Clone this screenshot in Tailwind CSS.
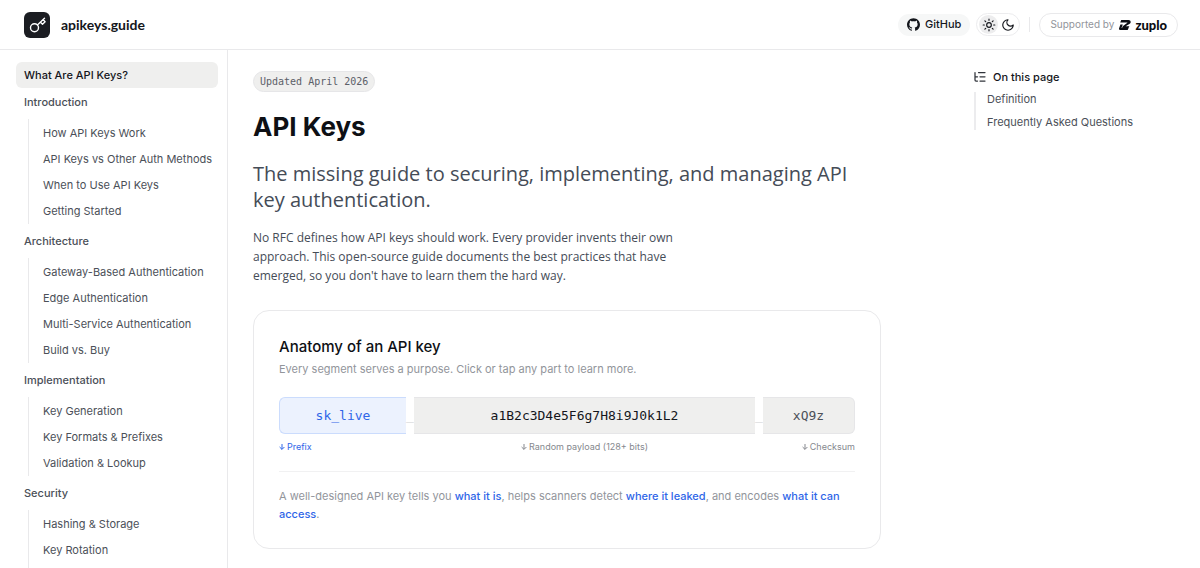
<!DOCTYPE html>
<html lang="en">
<head>
  <meta charset="UTF-8" />
  <meta name="viewport" content="width=device-width, initial-scale=1.0"/>
  <title>API Keys | apikeys.guide</title>
  <script src="https://cdn.jsdelivr.net/npm/@tailwindcss/browser@4"></script>
</head>
<body class="bg-white min-h-screen font-['Inter',sans-serif] text-[11px] text-[#4b5058]">
  <!-- Header -->
  <header class="flex h-[50px] items-center justify-between border-b border-[#e9e9eb] pl-6 pr-[22px]">
    <a href="#" class="flex items-center gap-[11px]">
      <svg class="size-[26px]" viewBox="0 0 26 26" fill="none" aria-hidden="true">
        <rect width="26" height="26" rx="6" fill="#1b1d22"/>
        <g stroke="#fff" stroke-width="1.4" stroke-linecap="round" stroke-linejoin="round">
          <circle cx="10.500" cy="15.800" r="4"/>
          <path d="M13.400 12.900 20.500 6.200M16.500 10.200l2 2 2.600-2.400-2-2.200"/>
        </g>
      </svg>
      <span class="font-['Lato',sans-serif] text-[14px] font-bold text-[#14161c]">apikeys.guide</span>
    </a>

    <div class="flex items-center">
      <a href="#" class="flex h-[22px] items-center gap-[5px] rounded-full bg-[#f6f7f7] px-[9px] text-[11px] font-medium text-[#14161c]">
        <svg class="size-[13px]" viewBox="0 0 24 24" fill="#14161c" aria-hidden="true">
          <path d="M12 .297c-6.630 0-12 5.373-12 12 0 5.303 3.438 9.800 8.205 11.385.6.113.82-.258.82-.577 0-.285-.010-1.040-.015-2.040-3.338.724-4.042-1.610-4.042-1.610C4.422 18.070 3.633 17.700 3.633 17.700c-1.087-.744.084-.729.084-.729 1.205.084 1.838 1.236 1.838 1.236 1.070 1.835 2.809 1.305 3.495.998.108-.776.417-1.305.76-1.605-2.665-.3-5.466-1.332-5.466-5.930 0-1.310.465-2.380 1.235-3.220-.135-.303-.54-1.523.105-3.176 0 0 1.005-.322 3.300 1.230.96-.267 1.980-.399 3-.405 1.020.006 2.040.138 3 .405 2.280-1.552 3.285-1.230 3.285-1.230.645 1.653.24 2.873.12 3.176.765.84 1.230 1.910 1.230 3.220 0 4.610-2.805 5.625-5.475 5.920.42.36.81 1.096.81 2.220 0 1.606-.015 2.896-.015 3.286 0 .315.210.69.825.57C20.565 22.092 24 17.592 24 12.297c0-6.627-5.373-12-12-12"/>
        </svg>
        GitHub
      </a>
      <div class="ml-[6px] flex h-[23px] items-center rounded-full border border-[#ececee] px-[2px]">
        <button type="button" aria-label="Light theme" class="flex size-[19px] items-center justify-center rounded-full bg-[#ededee]">
          <svg class="size-[14px]" viewBox="0 0 24 24" fill="none" stroke="#14161c" stroke-width="2" stroke-linecap="round" stroke-linejoin="round">
            <circle cx="12" cy="12" r="4"/>
            <path d="M12 2v2M12 20v2M4.930 4.930l1.410 1.410M17.660 17.660l1.410 1.410M2 12h2M20 12h2M6.340 17.660l-1.410 1.410M19.070 4.930l-1.410 1.410"/>
          </svg>
        </button>
        <button type="button" aria-label="Dark theme" class="flex size-[19px] items-center justify-center rounded-full">
          <svg class="size-[14px]" viewBox="0 0 24 24" fill="none" stroke="#14161c" stroke-width="2" stroke-linecap="round" stroke-linejoin="round">
            <path d="M12 3a6 6 0 0 0 9 9 9 9 0 1 1-9-9Z"/>
          </svg>
        </button>
      </div>
      <span class="ml-[9px] h-[15px] w-px bg-[#e9e9eb]"></span>
      <a href="#" class="ml-[9px] flex h-6 items-center rounded-full border border-[#e9e9eb] px-[10px]">
        <span class="text-[10px] text-[#92959b]">Supported by</span>
        <svg class="ml-[5px] h-[10px] w-3" viewBox="0 0 12 10" fill="#0b0d12" aria-hidden="true">
          <path d="M2.200 0h7.300c1.700 0 2.600 1.400 2 2.700-.2.600-.6 1-1.200 1.400L6.600 6.300h3.800L9.300 8.200H3l.4-1.300c.2-.5.5-.8 1-1.100l3.700-2.700c.4-.3.2-.7-.2-.7H1.200z"/>
          <path d="M0 8.400 1.400 4.500h2.400L2.500 7.900h7L8.700 10H1.200C.3 10-.3 9.200 0 8.400z"/>
        </svg>
        <span class="ml-[4px] font-['Lato',sans-serif] text-[13px] leading-4 font-black text-[#0b0d12]">zuplo</span>
      </a>
    </div>
  </header>

  <div class="flex">
    <!-- Sidebar -->
    <nav class="h-[calc(100vh-50px)] w-[228px] shrink-0 overflow-hidden border-r border-[#e9e9eb] pt-3 pl-4 pr-[9px]">
      <a href="#" class="flex h-[26px] items-center rounded-md bg-[#efefee] px-2 font-medium text-[#14161c]">What Are API Keys?</a>

      <h2 class="mt-[1px] flex h-[26px] items-center px-2 font-medium">Introduction</h2>
      <ul class="mt-[4px] ml-3 border-l border-[#e9e9eb] pt-px pl-[14px] whitespace-nowrap">
        <li class="flex h-[26px] items-center"><a href="#">How API Keys Work</a></li>
        <li class="flex h-[26px] items-center"><a href="#">API Keys vs Other Auth Methods</a></li>
        <li class="flex h-[26px] items-center"><a href="#">When to Use API Keys</a></li>
        <li class="flex h-[26px] items-center"><a href="#">Getting Started</a></li>
      </ul>

      <h2 class="mt-[4px] flex h-[26px] items-center px-2 font-medium">Architecture</h2>
      <ul class="mt-[4px] ml-3 border-l border-[#e9e9eb] pt-px pl-[14px] whitespace-nowrap">
        <li class="flex h-[26px] items-center"><a href="#">Gateway-Based Authentication</a></li>
        <li class="flex h-[26px] items-center"><a href="#">Edge Authentication</a></li>
        <li class="flex h-[26px] items-center"><a href="#">Multi-Service Authentication</a></li>
        <li class="flex h-[26px] items-center"><a href="#">Build vs. Buy</a></li>
      </ul>

      <h2 class="mt-[4px] flex h-[26px] items-center px-2 font-medium">Implementation</h2>
      <ul class="mt-[4px] ml-3 border-l border-[#e9e9eb] pt-px pl-[14px] whitespace-nowrap">
        <li class="flex h-[26px] items-center"><a href="#">Key Generation</a></li>
        <li class="flex h-[26px] items-center"><a href="#">Key Formats &amp; Prefixes</a></li>
        <li class="flex h-[26px] items-center"><a href="#">Validation &amp; Lookup</a></li>
      </ul>

      <h2 class="mt-[4px] flex h-[26px] items-center px-2 font-medium">Security</h2>
      <ul class="mt-[4px] ml-3 border-l border-[#e9e9eb] pt-px pb-6 pl-[14px] whitespace-nowrap">
        <li class="flex h-[26px] items-center"><a href="#">Hashing &amp; Storage</a></li>
        <li class="flex h-[26px] items-center"><a href="#">Key Rotation</a></li>
      </ul>
    </nav>

    <!-- Content -->
    <main class="min-w-0 flex-1 pt-[21px] pl-[25px] pr-[93px]">
      <span class="inline-flex h-[21px] items-center rounded-full border border-[#e6e6e8] bg-[#efefee] px-[6px] font-['DejaVu_Sans_Mono',monospace] text-[10px] text-[#5b6068]">Updated April 2026</span>

      <h1 class="mt-[15px] text-[26px] leading-[40px] font-bold text-[#0e1015]">API Keys</h1>
      <p class="mt-[14px] font-['Open_Sans',sans-serif] text-[20px] leading-[26px] text-[#454c57]">The missing guide to securing, implementing, and managing API key authentication.</p>
      <p class="mt-[15px] max-w-[440px] font-['Open_Sans',sans-serif] text-[12px] leading-[19px] text-[#454c57]">No RFC defines how API keys should work. Every provider invents their own approach. This open-source guide documents the best practices that have emerged, so you don't have to learn them the hard way.</p>

      <!-- Key anatomy card -->
      <section class="mt-[25px] rounded-2xl border border-[#e9e9eb] px-[25px] pt-[25px] pb-[25px]">
        <h2 class="text-[15px] leading-[22px] font-medium text-[#0e1015]">Anatomy of an API key</h2>
        <p class="mt-[2px] leading-[18px] text-[#92959b]">Every segment serves a purpose. Click or tap any part to learn more.</p>

        <div class="mt-[19px] flex h-[37px] font-['DejaVu_Sans_Mono',monospace] text-[13px]">
          <button type="button" class="w-[127px] rounded-l-md border border-r-0 border-[#cbdcfd] bg-[#ecf2fe] text-[#2f66e8]">sk_live</button>
          <span class="flex w-2 items-center justify-center text-[#cfd0d3]">_</span>
          <button type="button" class="flex-1 border-y border-[#e6e6e8] bg-[#efefee] text-[#14161c]">a1B2c3D4e5F6g7H8i9J0k1L2</button>
          <span class="flex w-2 items-center justify-center text-[#cfd0d3]">_</span>
          <button type="button" class="w-[92px] rounded-r-md border border-l-0 border-[#e6e6e8] bg-[#efefee] text-[#4b5058]">xQ9z</button>
        </div>

        <div class="mt-[6px] flex justify-between text-[9px] leading-[14px] text-[#85888e]">
          <span class="flex w-[127px] items-center gap-[2px] text-[#2f66e8]">
            <svg class="size-[6px]" viewBox="0 0 6 6" fill="none" stroke="currentColor" aria-hidden="true"><path d="M3 0v5.300M.6 3 3 5.400 5.400 3"/></svg>
            Prefix
          </span>
          <span class="flex items-center gap-[2px]">
            <svg class="size-[6px]" viewBox="0 0 6 6" fill="none" stroke="currentColor" aria-hidden="true"><path d="M3 0v5.300M.6 3 3 5.400 5.400 3"/></svg>
            Random payload (128+ bits)
          </span>
          <span class="flex w-[92px] items-center justify-end gap-[2px]">
            <svg class="size-[6px]" viewBox="0 0 6 6" fill="none" stroke="currentColor" aria-hidden="true"><path d="M3 0v5.300M.6 3 3 5.400 5.400 3"/></svg>
            Checksum
          </span>
        </div>

        <p class="mt-[17px] border-t border-[#f1f1f2] pt-[15px] leading-[18px] text-[#92959b]">A well-designed API key tells you <strong class="font-medium text-[#2f66e8]">what it is</strong>, helps scanners detect <strong class="font-medium text-[#2f66e8]">where it leaked</strong>, and encodes <strong class="font-medium text-[#2f66e8]">what it can access</strong>.</p>
      </section>
    </main>

    <!-- Table of contents -->
    <aside class="w-[226px] shrink-0 pt-[18px]">
      <h2 class="flex h-[18px] items-center gap-[7px] font-medium text-[#14161c]">
        <svg class="size-3" viewBox="0 0 24 24" fill="none" stroke="#30343b" stroke-width="2.500" stroke-linecap="round" stroke-linejoin="round" aria-hidden="true">
          <path d="M2 3v15a2 2 0 0 0 2 2h3M2 11.500h5M9 3h13M12 11.500h10M12 20h10"/>
        </svg>
        On this page
      </h2>
      <ul class="mt-[6px] border-l-2 border-[#ececee] pl-[11px]">
        <li class="mb-[8px] leading-[15px]"><a href="#">Definition</a></li>
        <li class="leading-[15px]"><a href="#">Frequently Asked Questions</a></li>
      </ul>
    </aside>
  </div>
</body>
</html>
